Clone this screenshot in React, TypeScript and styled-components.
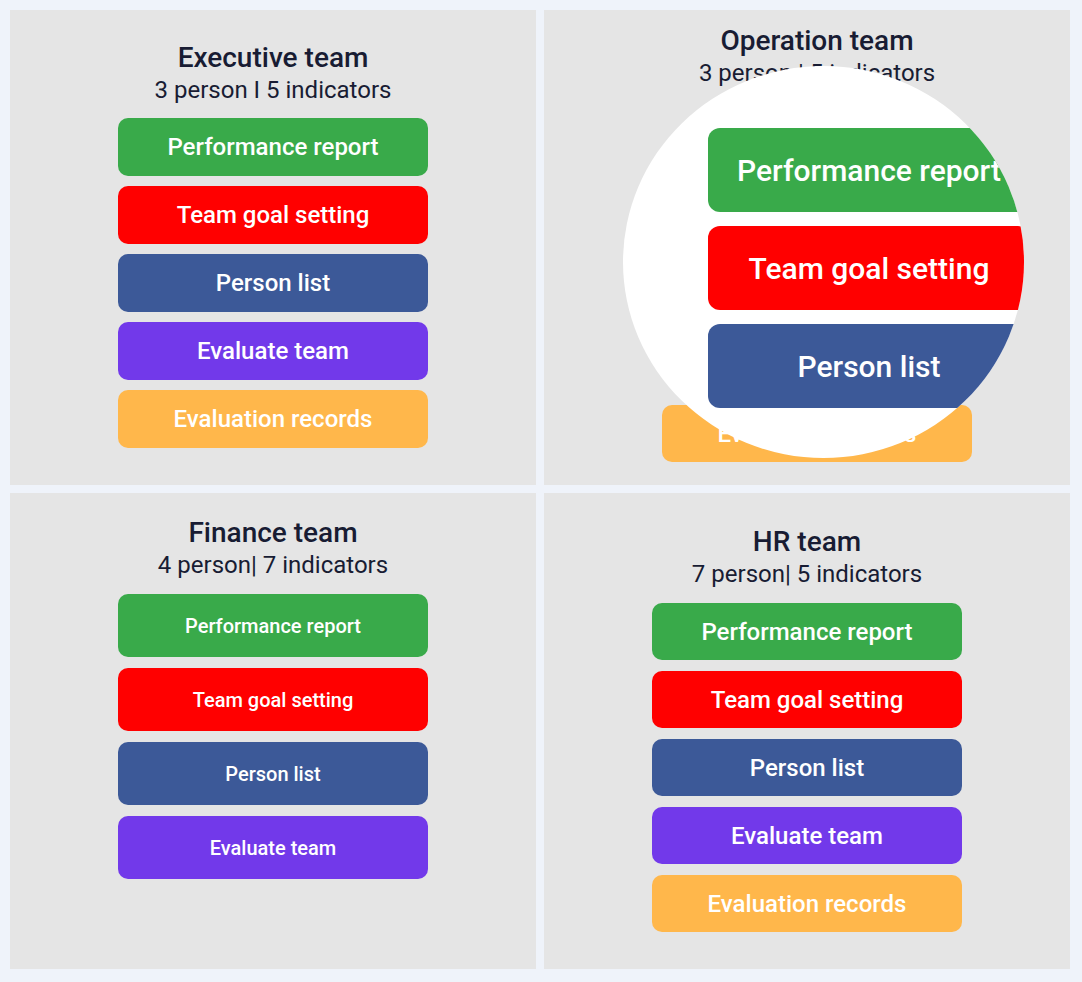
import styled, { createGlobalStyle } from "styled-components";

// ============================================
// Global
// ============================================
const GlobalStyle = createGlobalStyle`
  html, body {
    margin: 0;
    padding: 0;
    background: #eff3fa;
    font-family: Roboto, "Noto Sans", "Liberation Sans", sans-serif;
  }
  * { box-sizing: border-box; }
`;

const COLORS = {
  green: "#39aa4a",
  red: "#ff0000",
  blue: "#3c5998",
  purple: "#7239ea",
  orange: "#ffb74b",
  panel: "#e5e5e5",
  ink: "#181c33",
};

// ============================================
// Styled Components
// ============================================
const Board = styled.div`
  display: grid;
  grid-template-columns: 526px 526px;
  grid-template-rows: 475px 476px;
  gap: 8px;
  padding: 10px 12px 13px 10px;
  width: 1082px;
  height: 982px;
`;

const Panel = styled.section<{ $top: number; $shift?: number }>`
  position: relative;
  background: ${COLORS.panel};
  display: flex;
  flex-direction: column;
  align-items: center;
  padding-top: ${(p) => p.$top}px;
  padding-left: ${(p) => (p.$shift ?? 0) * 2}px;
  overflow: hidden;
`;

const Title = styled.h2`
  margin: 0;
  font-size: 28px;
  line-height: 33px;
  font-weight: 500;
  color: ${COLORS.ink};
`;

const Meta = styled.p<{ $gap: number }>`
  margin: 0 0 ${(p) => p.$gap}px 0;
  font-size: 24px;
  line-height: 33px;
  font-weight: 400;
  color: ${COLORS.ink};
`;

const ButtonStack = styled.div<{ $gap: number }>`
  display: flex;
  flex-direction: column;
  gap: ${(p) => p.$gap}px;
`;

const ActionButton = styled.button<{
  $color: string;
  $h: number;
  $w?: number;
  $size: number;
  $radius?: number;
  $covered?: boolean;
}>`
  width: ${(p) => p.$w ?? 310}px;
  height: ${(p) => p.$h}px;
  border: none;
  border-radius: ${(p) => p.$radius ?? 10}px;
  background: ${(p) => p.$color};
  color: #ffffff;
  font-family: Roboto, "Noto Sans", "Liberation Sans", sans-serif;
  font-size: ${(p) => p.$size}px;
  font-weight: 500;
  display: flex;
  align-items: center;
  justify-content: center;
  cursor: pointer;
  padding: 0;
  visibility: ${(p) => (p.$covered ? "hidden" : "visible")};
`;

const Magnifier = styled.div`
  position: absolute;
  left: 79px;
  top: 56px;
  width: 401px;
  height: 392px;
  border-radius: 50%;
  background: #ffffff;
  overflow: hidden;
  padding: 62px 0 0 85px;
`;

// ============================================
// Data
// ============================================
const ACTIONS = [
  { label: "Performance report", color: COLORS.green },
  { label: "Team goal setting", color: COLORS.red },
  { label: "Person list", color: COLORS.blue },
  { label: "Evaluate team", color: COLORS.purple },
  { label: "Evaluation records", color: COLORS.orange },
];

type TeamProps = {
  name: string;
  meta: string;
  top: number;
  metaGap: number;
  count: number;
  btnH: number;
  btnGap: number;
  size: number;
  shift?: number;
  covered?: number;
  children?: React.ReactNode;
};

function TeamPanel(props: TeamProps) {
  const covered = props.covered ?? 0;
  return (
    <Panel $top={props.top} $shift={props.shift}>
      <Title>{props.name}</Title>
      <Meta $gap={props.metaGap}>{props.meta}</Meta>
      <ButtonStack $gap={props.btnGap}>
        {ACTIONS.slice(0, props.count).map((a, i) => (
          <ActionButton
            key={a.label}
            $color={a.color}
            $h={props.btnH}
            $size={props.size}
            $covered={i < covered}
          >
            {a.label}
          </ActionButton>
        ))}
      </ButtonStack>
      {props.children}
    </Panel>
  );
}

// ============================================
// Main Component
// ============================================
export default function App() {
  return (
    <>
      <GlobalStyle />
      <Board>
        <TeamPanel
          name="Executive team"
          meta="3 person I 5 indicators"
          top={31}
          metaGap={11}
          count={5}
          btnH={58}
          btnGap={10}
          size={24}
        />
        <TeamPanel
          name="Operation team"
          meta="3 person | 5 indicators"
          top={14}
          metaGap={43}
          count={5}
          btnH={57}
          btnGap={11}
          size={24}
          shift={10}
          covered={4}
        >
          {/* zoomed view of the top three actions */}
          <Magnifier>
            <ButtonStack $gap={14}>
              {ACTIONS.slice(0, 3).map((a) => (
                <ActionButton
                  key={a.label}
                  $color={a.color}
                  $h={84}
                  $w={322}
                  $size={30}
                  $radius={12}
                >
                  {a.label}
                </ActionButton>
              ))}
            </ButtonStack>
          </Magnifier>
        </TeamPanel>
        <TeamPanel
          name="Finance team"
          meta="4 person| 7 indicators"
          top={23}
          metaGap={12}
          count={4}
          btnH={63}
          btnGap={11}
          size={20}
        />
        <TeamPanel
          name="HR team"
          meta="7 person| 5 indicators"
          top={32}
          metaGap={12}
          count={5}
          btnH={57}
          btnGap={11}
          size={24}
        />
      </Board>
    </>
  );
}
